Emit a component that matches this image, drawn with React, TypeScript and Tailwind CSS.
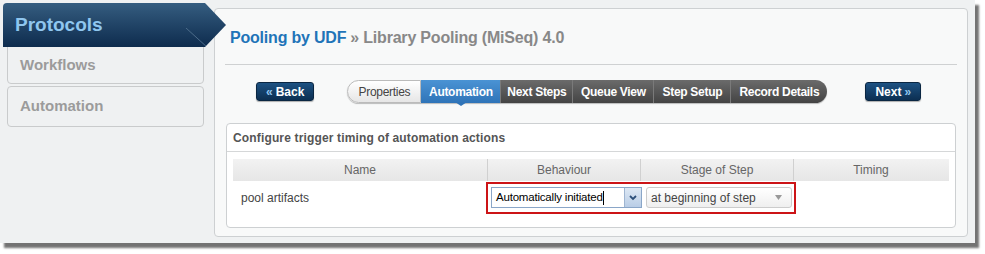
import React from "react"

const din = { fontFamily: '"Liberation Sans", Arial, sans-serif' }

const tabs = [
  { label: "Properties", w: 74, kind: "light" },
  { label: "Automation", w: 79, kind: "active" },
  { label: "Next Steps", w: 72, kind: "dark" },
  { label: "Queue View", w: 81, kind: "dark" },
  { label: "Step Setup", w: 77, kind: "dark" },
  { label: "Record Details", w: 97, kind: "dark" },
]

function NavButton({ children }: { children: React.ReactNode }) {
  return (
    <div className="h-[19px] px-[9px] flex items-center rounded-[3px] bg-gradient-to-b from-[#1d5283] to-[#0c2f52] border border-[#0a2642] text-white text-[12px] font-bold shadow-[0_1px_1px_rgba(0,0,0,0.3)]">
      {children}
    </div>
  )
}

function TabPill() {
  return (
    <div className="flex h-[23px] rounded-full shadow-[0_1px_1px_rgba(0,0,0,0.25)]">
      {tabs.map((t, i) => {
        let cls = "bg-gradient-to-b from-[#6b6b6b] to-[#444] text-white border-l border-[#7a7a7a] font-bold"
        if (t.kind === "light") cls = "bg-gradient-to-b from-white to-[#e6e6e6] text-[#444] border border-[#bbb] rounded-l-full font-normal"
        if (t.kind === "active") cls = "bg-gradient-to-b from-[#4a93d4] to-[#2f74b8] text-white relative font-bold"
        if (i === tabs.length - 1) cls += " rounded-r-full"
        return (
          <div
            key={t.label}
            style={{ width: t.w }}
            className={`flex items-center justify-center text-[12px] tracking-[-0.3px] ${cls}`}
          >
            {t.label}
            {t.kind === "active" && (
              <div className="absolute left-1/2 -translate-x-1/2 top-[22px] w-0 h-0 border-l-[6px] border-r-[6px] border-t-[4px] border-l-transparent border-r-transparent border-t-[#2f74b8]" />
            )}
          </div>
        )
      })}
    </div>
  )
}

export default function App() {
  return (
    <div className="w-[985px] h-[254px] bg-white" style={din}>
      <div className="w-[975px] h-[243px] bg-[#eff1f2] flex shadow-[4px_5px_2px_rgba(0,0,0,0.55)]">
        {/* sidebar */}
        <div className="w-[214px] shrink-0 pt-[3px] pl-[3px] flex flex-col">
          <div className="relative z-10 w-[223px] h-[44px] bg-gradient-to-b from-[#355d80] to-[#0e2c4e] [clip-path:polygon(0_0,202px_0,223px_22px,202px_44px,0_44px)] rounded-tl-[4px] flex items-center pl-[12px]">
            <span className="text-[#8fc6ef] text-[19px] font-bold">Protocols</span>
            <svg className="absolute left-[183px] top-[25px]" width="22" height="20">
              <line x1="0" y1="0" x2="22" y2="20" stroke="#4d6c8a" strokeWidth="1" />
            </svg>
          </div>
          <div className="ml-[4px] w-[197px] h-[38px] -mt-px border border-[#c9cbcc] rounded-b-[4px] flex items-center pl-[12px] text-[#9b9b9b] text-[15px] font-bold">
            Workflows
          </div>
          <div className="ml-[4px] mt-[2px] w-[197px] h-[41px] border border-[#c9cbcc] rounded-[4px] flex items-center pl-[12px] text-[#9b9b9b] text-[15px] font-bold">
            Automation
          </div>
        </div>

        {/* main panel */}
        <div className="mt-[8px] w-[754px] h-[229px] bg-[#f8f9f9] border border-[#cdd0d2] rounded-[4px] flex flex-col">
          <div className="h-[55px] flex items-center pl-[15px] pt-[3px] text-[16px] font-bold tracking-[-0.2px]">
            <span className="text-[#1f74b8]">Pooling by UDF</span>
            <span className="text-[#888] ml-[4px]">» Library Pooling (MiSeq) 4.0</span>
          </div>
          <div className="mx-[10px] h-px bg-[#cfd1d2]" />
          <div className="flex items-center mt-[15px] h-[23px]">
            <div className="ml-[41px]">
              <NavButton>
                <span className="text-[#8fc6ef] mr-[3px]">«</span>Back
              </NavButton>
            </div>
            <div className="ml-[33px]">
              <TabPill />
            </div>
            <div className="ml-[38px]">
              <NavButton>
                Next<span className="text-[#8fc6ef] ml-[3px]">»</span>
              </NavButton>
            </div>
          </div>

          {/* inner box */}
          <div className="mt-[20px] mx-[11px] h-[105px] bg-white border border-[#cdd0d2] rounded-[4px] flex flex-col">
            <div className="h-[28px] border-b border-[#d5d7d8] flex items-center pl-[6px] text-[12px] font-bold text-[#555] tracking-[0.15px]">
              Configure trigger timing of automation actions
            </div>
            <div className="mx-[6px] mt-[7px] text-[12px]">
              <div className="flex h-[22px] bg-gradient-to-b from-[#f2f2f2] to-[#e6e6e6] text-[#666] text-[12px]">
                <div className="w-[255px] flex items-center justify-center border-r border-[#d0d0d0]">Name</div>
                <div className="w-[153px] flex items-center justify-center border-r border-[#d0d0d0]">Behaviour</div>
                <div className="w-[153px] flex items-center justify-center border-r border-[#d0d0d0]">Stage of Step</div>
                <div className="w-[154px] flex items-center justify-center">Timing</div>
              </div>
              <div className="flex items-center h-[33px]">
                <div className="w-[253px] pl-[8px] text-[#444] text-[12px]">pool artifacts</div>
                <div className="relative flex items-center gap-[4px] border-2 border-[#cc1417] h-[32px] w-[310px] pl-[3px]">
                  <div className="flex h-[21px] w-[151px] border border-[#8aa6c8] bg-white">
                    <div className="flex-1 flex items-center pl-[4px] text-[11.5px] text-black tracking-[-0.2px]">
                      Automatically initiated<span className="w-px h-[14px] bg-black" />
                    </div>
                    <div className="w-[17px] border-l border-[#9fb5d1] bg-gradient-to-b from-[#dde8f4] to-[#b9cde6] flex items-center justify-center">
                      <svg width="8" height="6" viewBox="0 0 8 6">
                        <path d="M1 1 L4 4 L7 1" fill="none" stroke="#2c4f7a" strokeWidth="1.8" />
                      </svg>
                    </div>
                  </div>
                  <div className="flex items-center justify-between h-[21px] w-[146px] border border-[#ccc] rounded-[3px] bg-gradient-to-b from-white to-[#efefef] pl-[4px] pr-[9px] text-[12px] text-[#444]">
                    at beginning of step
                    <svg width="7" height="5" viewBox="0 0 7 5">
                      <path d="M0 0 L7 0 L3.5 5 Z" fill="#999" />
                    </svg>
                  </div>
                </div>
              </div>
            </div>
          </div>
        </div>
      </div>
    </div>
  )
}
